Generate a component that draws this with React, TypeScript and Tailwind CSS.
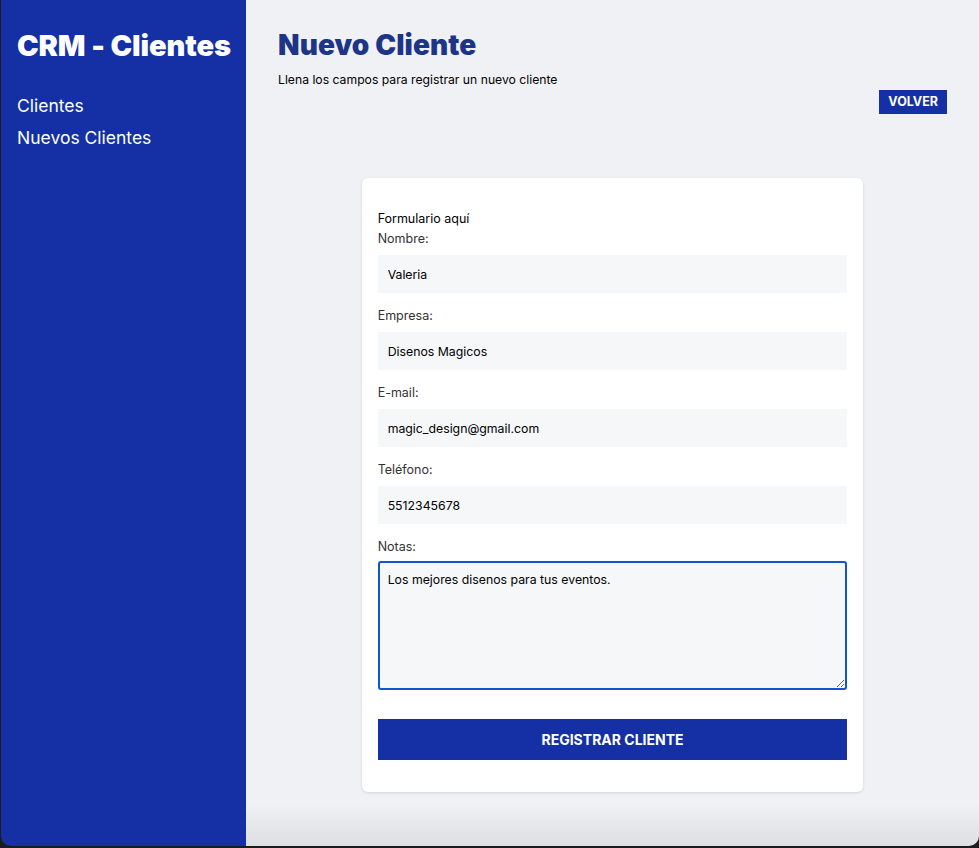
import React from "react";

const fields = [
  { label: "Nombre:", value: "Valeria" },
  { label: "Empresa:", value: "Disenos Magicos" },
  { label: "E-mail:", value: "magic_design@gmail.com" },
  { label: "Teléfono:", value: "5512345678" },
];

export default function App() {
  return (
    <div className="h-[848px] w-[979px] bg-[#1c1c1c] font-['Inter',sans-serif]">
      <div className="flex h-[846px] ml-px overflow-hidden rounded-b-[10px]">
        <aside className="w-[245px] shrink-0 bg-[#1430a4] pl-4 pr-2 pt-[28px]">
          <h1 className="whitespace-nowrap text-[29px] font-black text-white leading-9 tracking-[-0.1px]">CRM - Clientes</h1>
          <nav className="mt-[31px] flex flex-col gap-[10px]">
            <a className="text-white text-[17.5px] leading-[22px]">Clientes</a>
            <a className="text-white text-[17.5px] leading-[22px]">Nuevos Clientes</a>
          </nav>
        </aside>

        <main className="flex-1 bg-[linear-gradient(to_bottom,#f0f1f5_0%,#f0f1f5_95%,#dedfe3_100%)] px-8 pt-[27px]">
          <h2 className="text-[28px] font-black text-[#1d3587] leading-9 tracking-[0.1px]">Nuevo Cliente</h2>
          <p className="mt-[7px] text-[12.2px] leading-5 text-black">Llena los campos para registrar un nuevo cliente</p>

          <div className="flex justify-end">
            <button className="bg-[#1430a4] px-[9px] py-[4px] text-[12.5px] font-bold uppercase leading-4 text-white">
              Volver
            </button>
          </div>

          <div className="mx-auto mt-16 w-3/4 rounded-md bg-white px-4 pt-[31px] pb-8 shadow-[0_1px_3px_rgba(0,0,0,0.12)]">
            <p className="text-[12.5px] leading-5 text-black">Formulario aquí</p>
            <form>
              {fields.map((f) => (
                <div key={f.label} className="mb-[13px]">
                  <label className="block text-[12.5px] leading-5 text-[#333]">{f.label}</label>
                  <input
                    readOnly
                    value={f.value}
                    className="mt-[6px] block h-[38px] w-full bg-[#f6f7f9] px-[10px] text-[12.3px] text-black outline-none"
                  />
                </div>
              ))}
              <div>
                <label className="block text-[12.5px] leading-5 text-[#333]">Notas:</label>
                <textarea
                  readOnly
                  value="Los mejores disenos para tus eventos."
                  className="mt-[4px] block h-[129px] w-full rounded-[3px] border-2 border-[#0f56d0] bg-[#f6f7f9] px-[8px] py-[8px] text-[12.3px] text-black outline-none"
                />
              </div>
              <button
                type="button"
                className="mt-[29px] h-[41px] w-full bg-[#1430a4] text-[14px] font-bold uppercase text-white"
              >
                Registrar Cliente
              </button>
            </form>
          </div>
        </main>
      </div>
    </div>
  );
}
